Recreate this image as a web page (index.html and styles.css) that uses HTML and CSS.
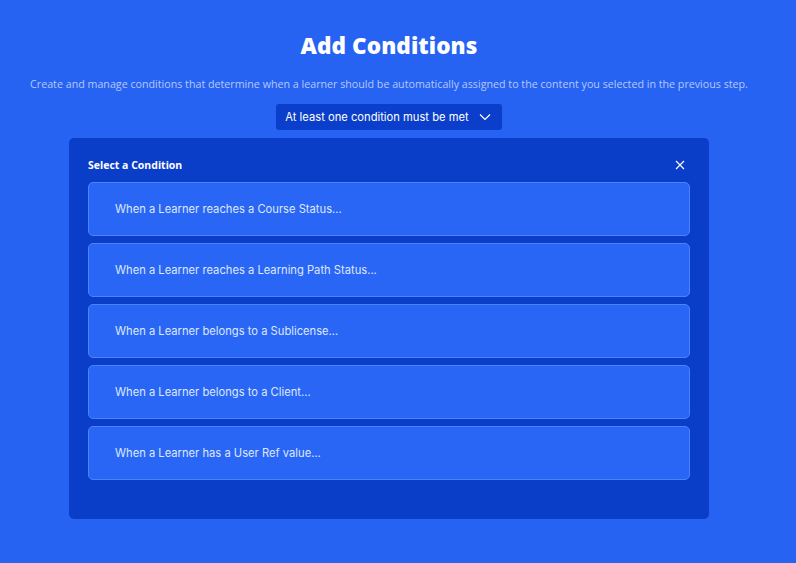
FILE: index.html
```html
<!DOCTYPE html>
<html>
<head>
<meta charset="utf-8">
<link rel="stylesheet" href="styles.css">
</head>
<body>
<main class="page">
  <h1 class="title">Add Conditions</h1>
  <p class="subtitle">Create and manage conditions that determine when a learner should be automatically assigned to the content you selected in the previous step.</p>
  <button class="dropdown">At least one condition must be met
    <svg class="chev" width="12" height="8" viewBox="0 0 12 8"><path d="M1 1.5 L6 6.5 L11 1.5" fill="none" stroke="#fff" stroke-width="1.2"/></svg>
  </button>
  <section class="card">
    <div class="card-head">
      <span class="card-title">Select a Condition</span>
      <svg class="close" width="10" height="10" viewBox="0 0 10 10"><path d="M1 1 L9 9 M9 1 L1 9" stroke="#fff" stroke-width="1.1"/></svg>
    </div>
    <div class="list">
      <div class="item">When a Learner reaches a Course Status...</div>
      <div class="item">When a Learner reaches a Learning Path Status...</div>
      <div class="item">When a Learner belongs to a Sublicense...</div>
      <div class="item">When a Learner belongs to a Client...</div>
      <div class="item">When a Learner has a User Ref value...</div>
    </div>
  </section>
</main>
</body>
</html>
```

FILE: styles.css
```css
html, body {
  margin: 0;
  padding: 0;
  background: #2663f3;
  height: 100%;
}
.page {
  width: 778px;
  display: flex;
  flex-direction: column;
  align-items: center;
  padding-top: 32px;
  font-family: Inter, "Noto Sans", sans-serif;
}
.title {
  margin: 0;
  font-family: "Open Sans", sans-serif;
  font-weight: 800;
  font-size: 22.5px;
  line-height: 28px;
  color: #fff;
  letter-spacing: 0.1px;
}
.subtitle {
  margin: 17px 0 0;
  font-family: "Open Sans", sans-serif;
  font-size: 10.7px;
  line-height: 14px;
  color: #b6c8fb;
}
.dropdown {
  margin-top: 13px;
  display: flex;
  align-items: center;
  gap: 10px;
  height: 26px;
  padding: 0 11px 0 9px;
  border: none;
  border-radius: 3px;
  background: #0b3fcb;
  color: #fff;
  font-family: Inter, sans-serif;
  font-size: 11.2px;
}
.card {
  margin-top: 8px;
  width: 640px;
  box-sizing: border-box;
  padding: 20px 19px 39px;
  background: #0a3dc8;
  border-radius: 5px;
}
.card-head {
  display: flex;
  justify-content: space-between;
  align-items: center;
  height: 14px;
  padding-right: 5px;
}
.card-title {
  font-family: "Open Sans", sans-serif;
  font-weight: 700;
  font-size: 10.5px;
  color: #fff;
}
.list {
  margin-top: 10px;
  display: flex;
  flex-direction: column;
  gap: 7px;
}
.item {
  height: 54px;
  box-sizing: border-box;
  display: flex;
  align-items: center;
  padding-left: 26px;
  background: #2a66f5;
  border: 1px solid #4a83fb;
  border-radius: 5px;
  color: #dde8ff;
  font-size: 11.2px;
}
```
